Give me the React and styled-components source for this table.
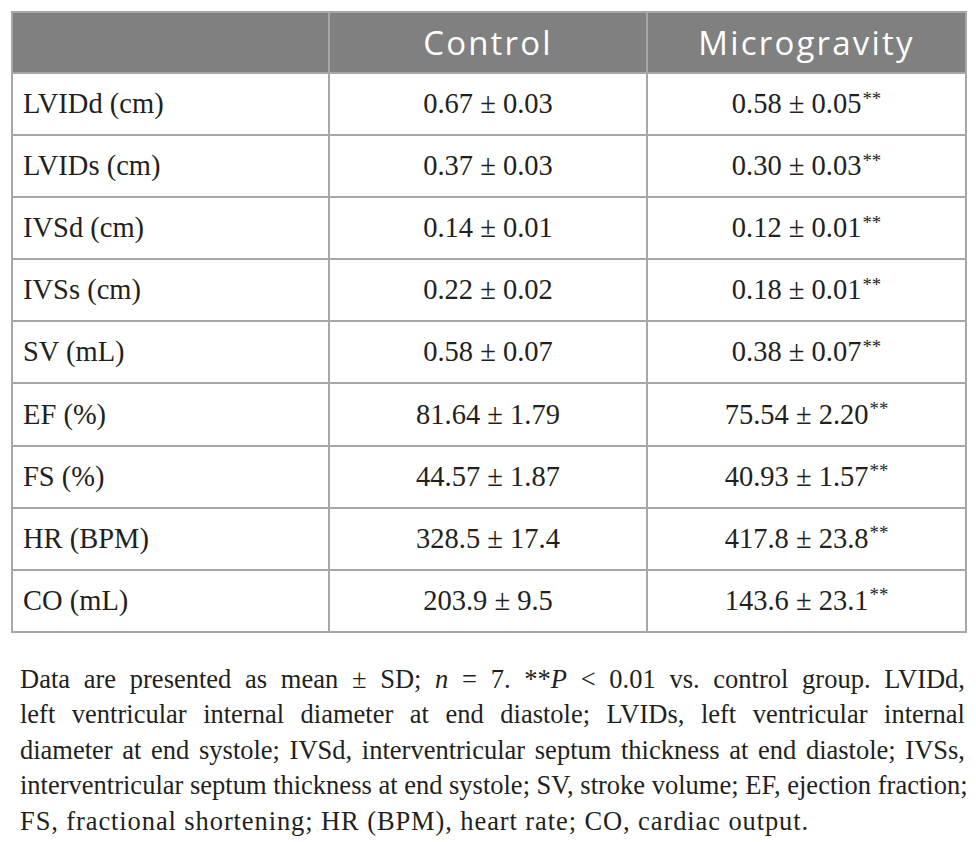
import React from "react";
import styled, { createGlobalStyle } from "styled-components";

const Global = createGlobalStyle`
  html, body { margin: 0; padding: 0; background: #ffffff; }
  body { font-family: "Liberation Serif", "Times New Roman", serif; color: #231f20; }
`;

const Page = styled.div`
  padding: 11px 11px 0 11px;
  width: 954px;
`;

const Table = styled.table`
  width: 954px;
  border-collapse: collapse;
  table-layout: fixed;
  border: 2px solid #a7a7a7;
`;

const HeadCell = styled.th`
  background: #808080;
  color: #ffffff;
  font-family: "Open Sans", "Lato", sans-serif;
  font-weight: 400;
  font-size: 33px;
  letter-spacing: 2.2px;
  height: 59px;
  padding: 0;
  text-align: center;
  border: 2px solid #a7a7a7;
`;

const Cell = styled.td`
  height: 60.1px;
  padding: 0 0 0 ${(p) => (p.$label ? "10px" : "0")};
  text-align: ${(p) => (p.$label ? "left" : "center")};
  font-size: 28.5px;
  border: 2px solid #a7a7a7;
  white-space: nowrap;
`;

const Sup = styled.sup`
  font-size: 0.66em;
  vertical-align: 0.45em;
  line-height: 0;
  margin-left: 1px;
`;

const Caption = styled.div`
  margin: 29px 0 0 9px;
  width: 945px;
  font-size: 26.5px;
  line-height: 35.5px;
  color: #231f20;
`;

const Line = styled.span`
  display: block;
  white-space: nowrap;
  text-align: ${(p) => (p.$last ? "left" : "justify")};
  text-align-last: ${(p) => (p.$last ? "left" : "justify")};
  letter-spacing: ${(p) => (p.$last ? "0.9px" : "0")};
`;

const rows = [
  ["LVIDd (cm)", "0.67 ± 0.03", "0.58 ± 0.05"],
  ["LVIDs (cm)", "0.37 ± 0.03", "0.30 ± 0.03"],
  ["IVSd (cm)", "0.14 ± 0.01", "0.12 ± 0.01"],
  ["IVSs (cm)", "0.22 ± 0.02", "0.18 ± 0.01"],
  ["SV (mL)", "0.58 ± 0.07", "0.38 ± 0.07"],
  ["EF (%)", "81.64 ± 1.79", "75.54 ± 2.20"],
  ["FS (%)", "44.57 ± 1.87", "40.93 ± 1.57"],
  ["HR (BPM)", "328.5 ± 17.4", "417.8 ± 23.8"],
  ["CO (mL)", "203.9 ± 9.5", "143.6 ± 23.1"],
];

export default function App() {
  return (
    <Page>
      <Global />
      <Table>
        <colgroup>
          <col style={{ width: "317px" }} />
          <col style={{ width: "318px" }} />
          <col style={{ width: "319px" }} />
        </colgroup>
        <thead>
          <tr>
            <HeadCell />
            <HeadCell>Control</HeadCell>
            <HeadCell>Microgravity</HeadCell>
          </tr>
        </thead>
        <tbody>
          {rows.map(([a, b, c]) => (
            <tr key={a}>
              <Cell $label>{a}</Cell>
              <Cell>{b}</Cell>
              <Cell>
                {c}
                <Sup>**</Sup>
              </Cell>
            </tr>
          ))}
        </tbody>
      </Table>
      <Caption>
        <Line>
          Data are presented as mean ± SD; <i>n</i> = 7. **<i>P</i> &lt; 0.01 vs. control group. LVIDd,
        </Line>
        <Line>left ventricular internal diameter at end diastole; LVIDs, left ventricular internal</Line>
        <Line>diameter at end systole; IVSd, interventricular septum thickness at end diastole; IVSs,</Line>
        <Line>interventricular septum thickness at end systole; SV, stroke volume; EF, ejection fraction;</Line>
        <Line $last>FS, fractional shortening; HR (BPM), heart rate; CO, cardiac output.</Line>
      </Caption>
    </Page>
  );
}
